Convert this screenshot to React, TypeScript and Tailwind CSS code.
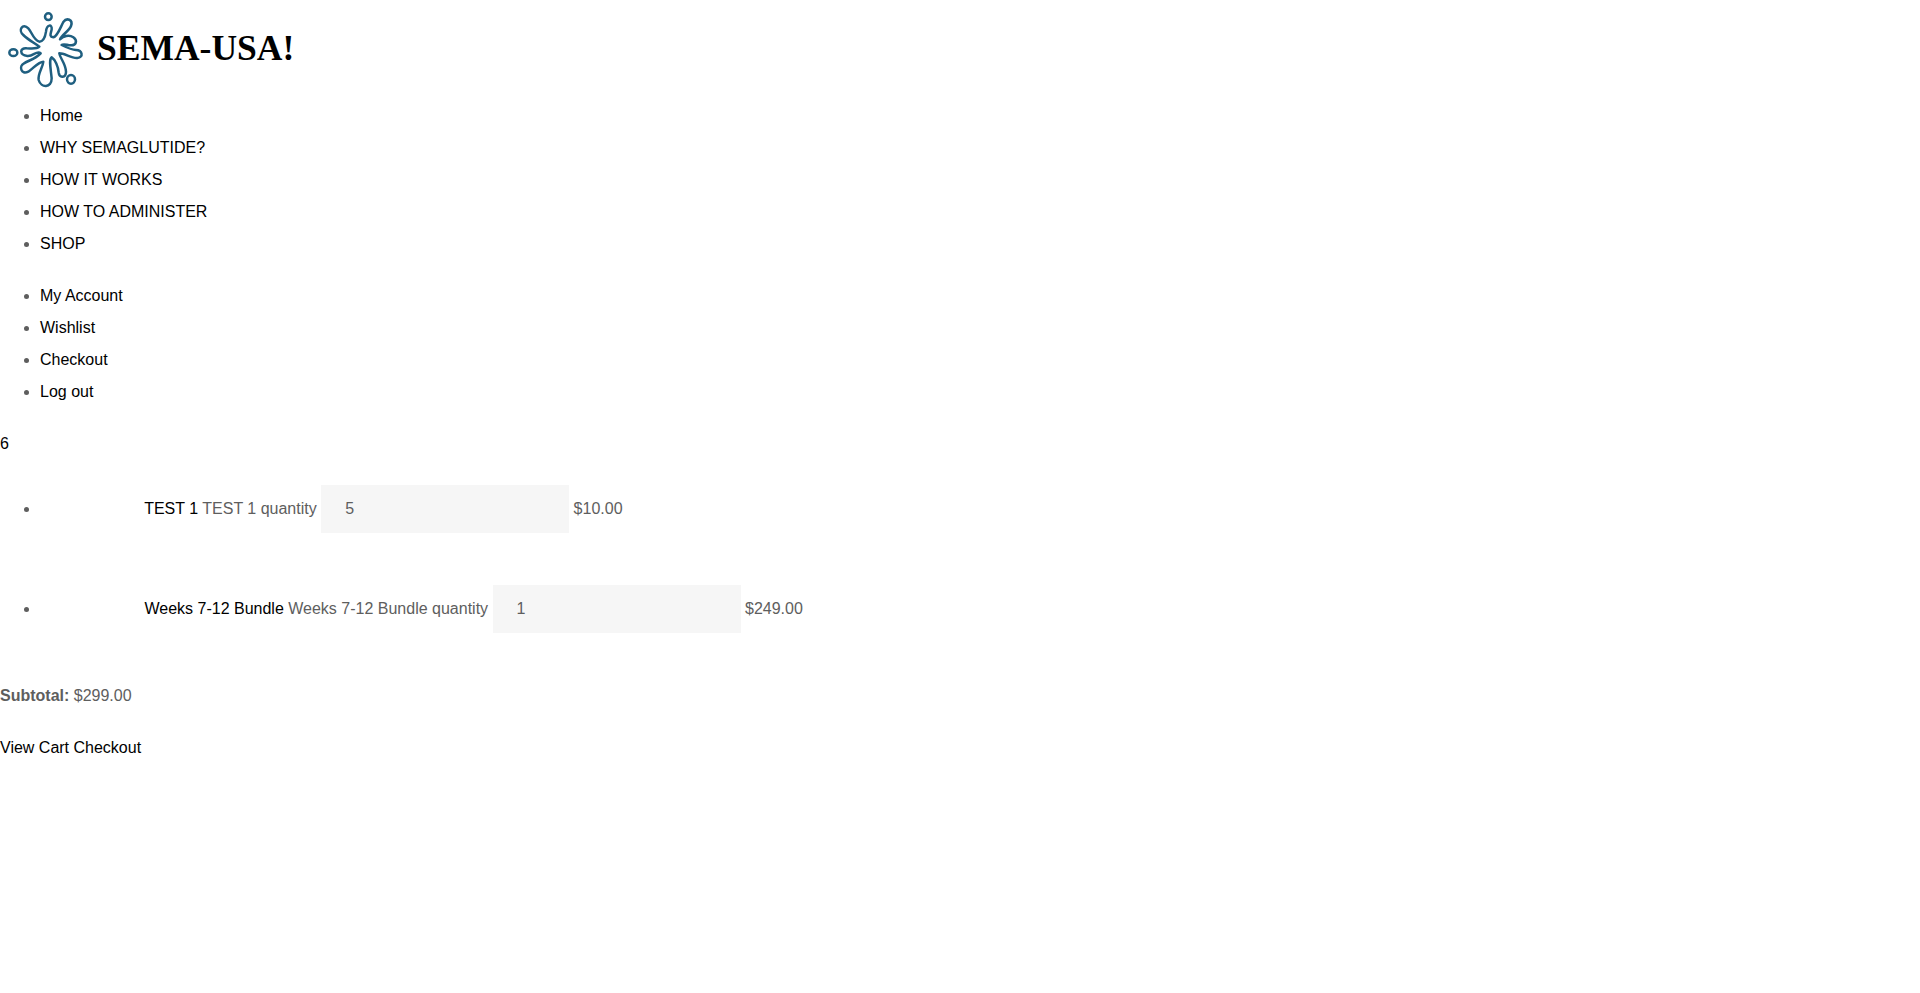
const primaryNav = ["Home", "WHY SEMAGLUTIDE?", "HOW IT WORKS", "HOW TO ADMINISTER", "SHOP"];
const accountNav = ["My Account", "Wishlist", "Checkout", "Log out"];
const cartItems = [
  { name: "TEST 1", qty: "5", price: "$10.00" },
  { name: "Weeks 7-12 Bundle", qty: "1", price: "$249.00" },
];

function Logo() {
  return (
    <svg className="h-[100px] w-[97px] shrink-0" viewBox="0 0 291 300" fill="none" stroke="#1f5f80" strokeWidth="7.5">
      <ellipse cx="145" cy="50" rx="10" ry="10" />
      <ellipse cx="40" cy="158" rx="12" ry="10" />
      <ellipse cx="213" cy="238" rx="12" ry="13" />
      <path
        strokeLinejoin="round"
        d="M118 125 C130 125 135 115 138 95 C140 72 157 72 155 88 C153 100 146 110 160 112 C172 110 180 85 190 66 C200 52 220 58 213 78 C208 92 185 105 180 118 C190 108 207 103 220 112 C234 122 228 137 212 136 C200 135 190 130 185 135 C195 140 215 150 228 150 C247 150 252 172 232 174 C215 176 195 160 178 160 C180 175 197 190 198 215 C198 234 178 235 176 218 C175 200 165 178 155 172 C146 178 152 205 155 235 C155 264 123 265 116 240 C113 220 128 205 130 185 C115 185 100 205 85 215 C63 226 56 198 72 190 C88 180 105 178 122 160 C110 150 100 170 82 168 C58 165 58 143 80 145 C95 145 110 148 118 140 C105 130 85 120 70 105 C53 90 68 68 85 85 C95 95 100 120 118 125 Z"
      />
    </svg>
  );
}

export default function App() {
  return (
    <div className="min-h-[993px] bg-white font-['Liberation_Sans',Arial,sans-serif] text-base leading-8 text-[#5e5e5e]">
      {/* Header logo */}
      <div className="flex h-[100px] items-center">
        <Logo />
        <span className="pb-[3px] font-['Liberation_Serif',serif] text-[35.5px] leading-none font-bold text-black">SEMA-USA!</span>
      </div>

      {/* Menus */}
      <ul className="mb-5 list-disc pl-10">
        {primaryNav.map((item) => (
          <li key={item}>
            <a href="#" className="text-black">{item}</a>
          </li>
        ))}
      </ul>
      <ul className="mb-5 list-disc pl-10">
        {accountNav.map((item) => (
          <li key={item}>
            <a href="#" className="text-black">{item}</a>
          </li>
        ))}
      </ul>

      <div className="text-black">6</div>

      {/* Mini cart */}
      <ul className="mb-5 list-disc pl-10">
        {cartItems.map((item) => (
          <li key={item.name} className="h-[100px]">
            <span className="inline-block h-[100px] w-[100px] align-middle" />{" "}
            <a href="#" className="text-black">{item.name}</a>{" "}
            <label>{item.name} quantity</label>{" "}
            <input
              readOnly
              type="text"
              value={item.qty}
              className="h-12 w-[248px] bg-[#f6f6f6] px-6 outline-none"
            />{" "}
            <span>{item.price}</span>
          </li>
        ))}
      </ul>

      <p className="mb-5">
        <strong className="font-bold">Subtotal:</strong> $299.00
      </p>
      <p className="text-black">
        <a href="#">View Cart</a> <a href="#">Checkout</a>
      </p>
    </div>
  );
}
